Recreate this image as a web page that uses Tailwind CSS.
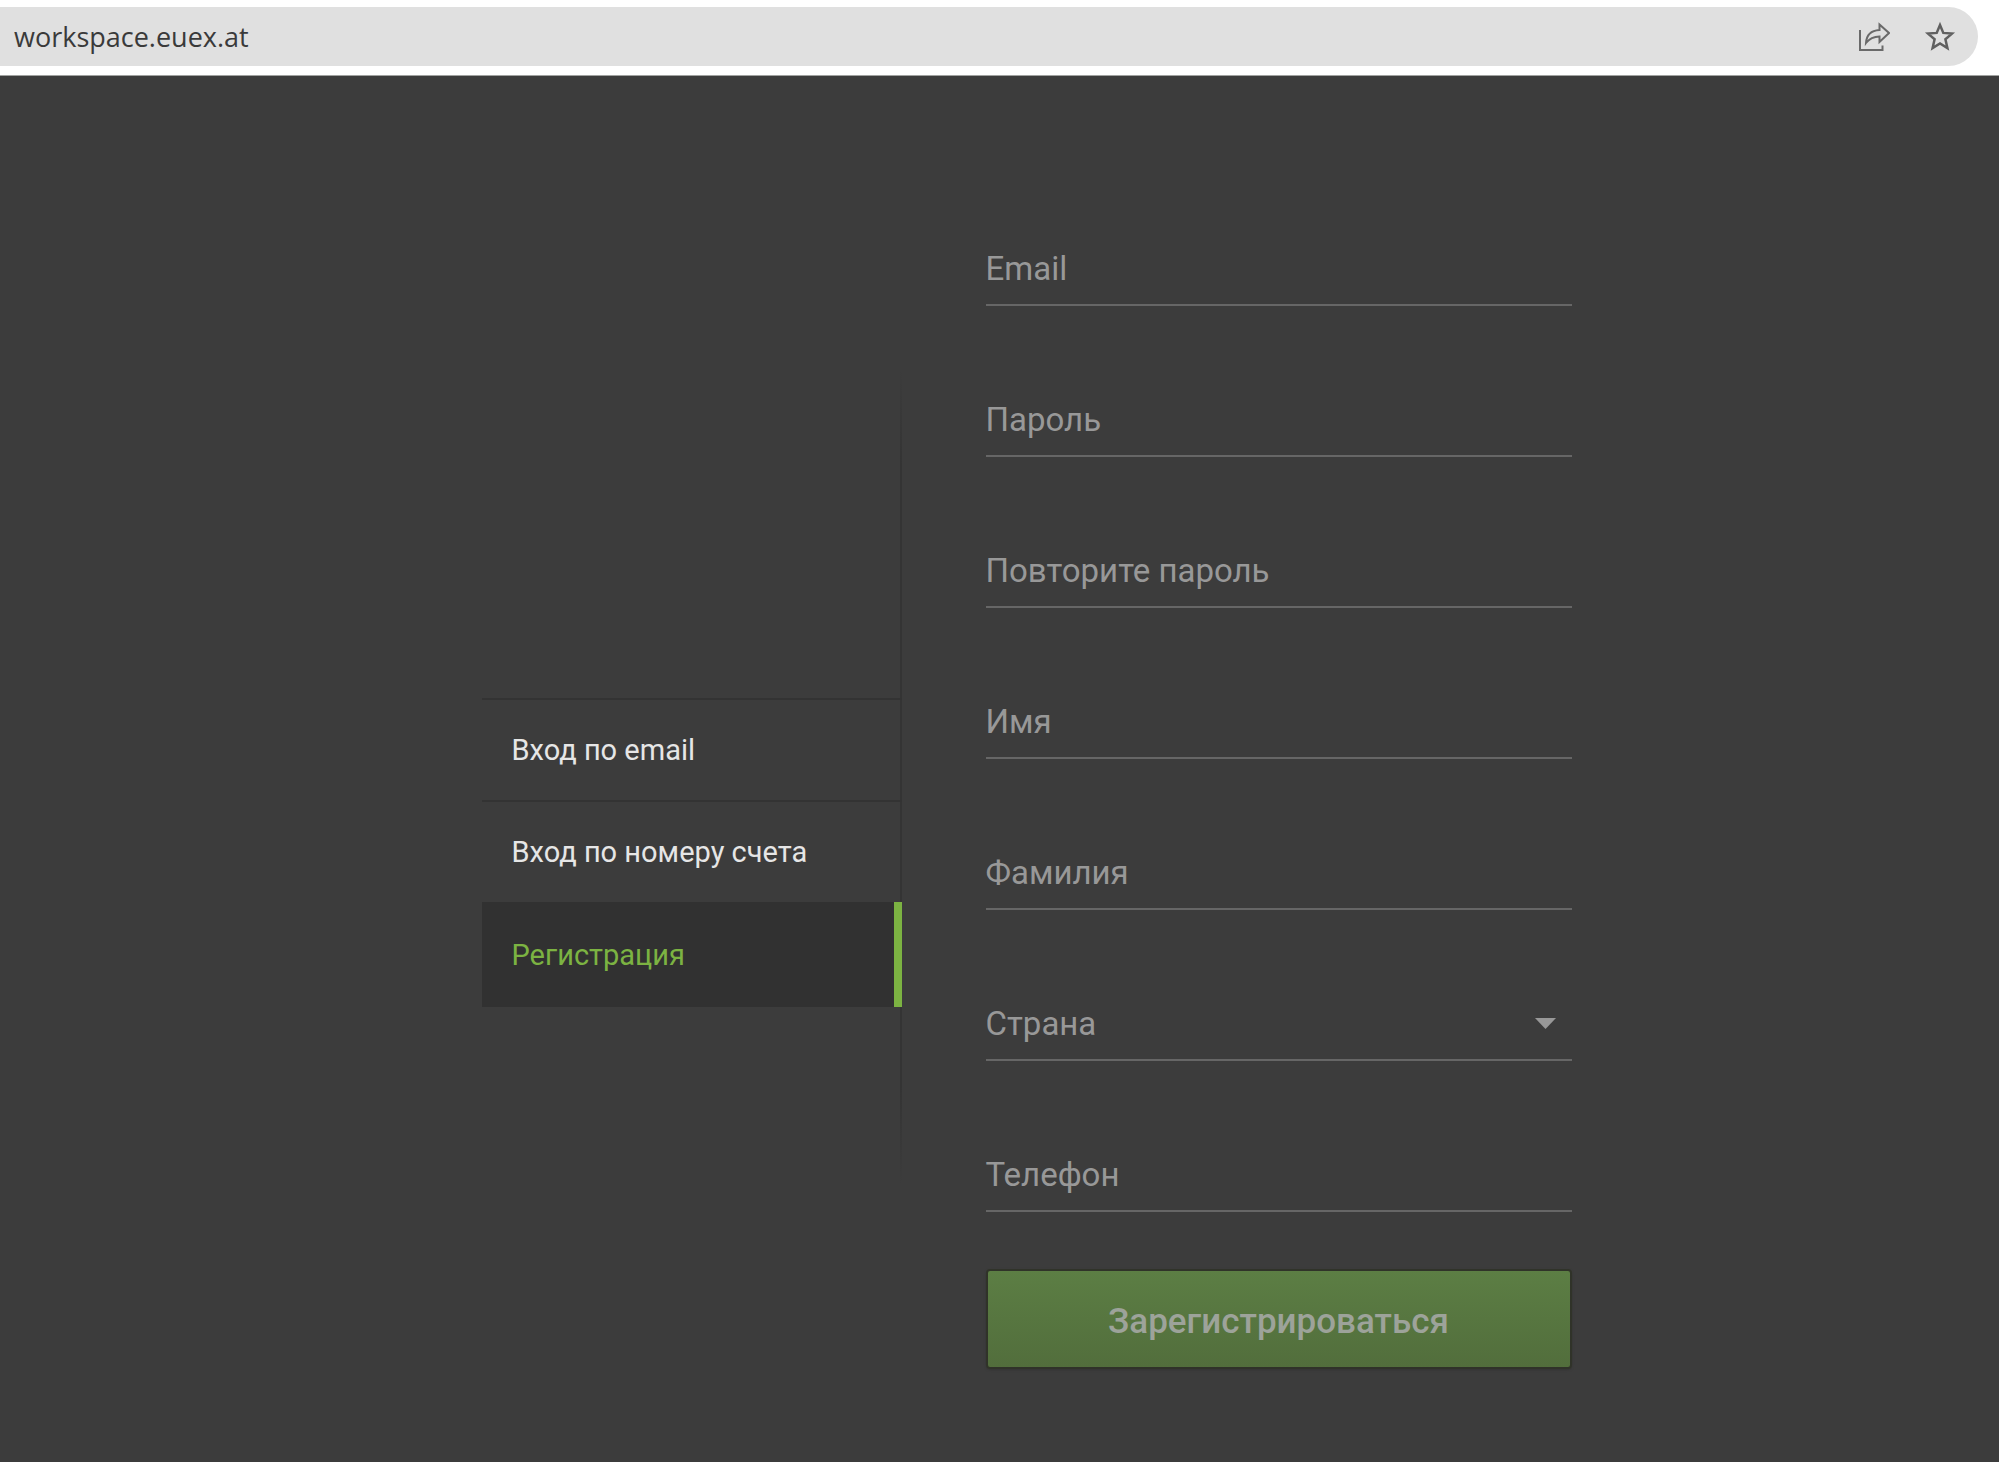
<!DOCTYPE html>
<html lang="ru">
<head>
<meta charset="utf-8">
<meta name="viewport" content="width=device-width, initial-scale=1">
<title>workspace.euex.at</title>
<script src="https://cdn.jsdelivr.net/npm/@tailwindcss/browser@4"></script>
</head>
<body class="flex min-h-screen flex-col bg-[#3c3c3c] font-['Roboto',sans-serif]">
  <!-- Address bar -->
  <header class="border-b border-[#a0a2a0] bg-white pt-[7px] pr-[21px] pb-[9px]">
    <div class="flex h-[59px] items-center justify-between rounded-r-full bg-[#e0e0e0] pr-[22px] pl-[14px]">
      <input type="text" aria-label="Адрес" value="workspace.euex.at" class="min-w-0 flex-1 bg-transparent font-['Open_Sans',sans-serif] text-[27px] leading-9 text-[#3a3a3a] outline-none">
      <div class="flex items-center gap-[34px]">
        <button type="button" aria-label="Поделиться" class="text-[#6a6a6a]">
          <svg class="size-8" viewBox="0 0 32 32" fill="none" stroke="currentColor" stroke-width="2"><path d="M2 9V29H24.500V24.500"/><path d="M8 22C8.500 14 13 9.500 21.500 9V3.500L31 12L21.500 21V15.500C15.500 15.500 11.500 17.500 8 22Z"/></svg>
        </button>
        <button type="button" aria-label="Добавить в закладки" class="text-[#606060]">
          <svg class="size-8" viewBox="0 0 32 32" fill="none" stroke="currentColor" stroke-width="2.5"><path d="M16 4L19.300 11.900L28 12.600L21.400 18.300L23.400 27L16 22.400L8.600 27L10.600 18.300L4 12.600L12.700 11.900Z"/></svg>
        </button>
      </div>
    </div>
  </header>

  <main class="flex flex-1 items-start justify-center gap-[84px] pb-[94px] pl-[54px]">
    <!-- Sign-in modes -->
    <aside class="relative mt-[292px] h-[817px] w-[420px] pt-[330px]">
      <div class="absolute top-0 right-0 h-full w-0.5 bg-[linear-gradient(transparent,#343434_12%,#343434_88%,transparent)]"></div>
      <nav class="relative flex flex-col text-[29px] leading-9 text-[#e6e6e6]">
        <a href="#email" class="flex h-[102px] items-center border-t-2 border-[#333333] pl-[30px]">Вход по email</a>
        <a href="#account" class="flex h-[102px] items-center border-t-2 border-[#333333] pl-[30px]">Вход по номеру счета</a>
        <a href="#register" aria-current="page" class="flex h-[105px] items-center border-r-8 border-[#7cb342] bg-[#313131] pl-[30px] text-[#7cb342]">Регистрация</a>
      </nav>
    </aside>

    <!-- Registration form -->
    <form class="flex w-[586px] flex-col pt-[149px] text-[33px] leading-10 text-[#989898]">
      <div class="flex flex-col gap-[70px]">
        <div class="grid h-[81px] border-b-2 border-[#666666]">
          <input id="email" type="email" placeholder=" " class="peer col-start-1 row-start-1 w-full bg-transparent pt-2 outline-none">
          <label for="email" class="pointer-events-none col-start-1 row-start-1 self-center pt-2 peer-[:not(:placeholder-shown)]:opacity-0">Email</label>
        </div>
        <div class="grid h-[81px] border-b-2 border-[#666666]">
          <input id="password" type="password" placeholder=" " class="peer col-start-1 row-start-1 w-full bg-transparent pt-2 outline-none">
          <label for="password" class="pointer-events-none col-start-1 row-start-1 self-center pt-2 peer-[:not(:placeholder-shown)]:opacity-0">Пароль</label>
        </div>
        <div class="grid h-[81px] border-b-2 border-[#666666]">
          <input id="repeat" type="password" placeholder=" " class="peer col-start-1 row-start-1 w-full bg-transparent pt-2 outline-none">
          <label for="repeat" class="pointer-events-none col-start-1 row-start-1 self-center pt-2 peer-[:not(:placeholder-shown)]:opacity-0">Повторите пароль</label>
        </div>
        <div class="grid h-[81px] border-b-2 border-[#666666]">
          <input id="name" type="text" placeholder=" " class="peer col-start-1 row-start-1 w-full bg-transparent pt-2 outline-none">
          <label for="name" class="pointer-events-none col-start-1 row-start-1 self-center pt-2 peer-[:not(:placeholder-shown)]:opacity-0">Имя</label>
        </div>
        <div class="grid h-[81px] border-b-2 border-[#666666]">
          <input id="surname" type="text" placeholder=" " class="peer col-start-1 row-start-1 w-full bg-transparent pt-2 outline-none">
          <label for="surname" class="pointer-events-none col-start-1 row-start-1 self-center pt-2 peer-[:not(:placeholder-shown)]:opacity-0">Фамилия</label>
        </div>
        <div class="grid h-[81px] border-b-2 border-[#666666]">
          <select id="country" required class="peer col-start-1 row-start-1 w-full appearance-none bg-transparent pt-2 outline-none">
            <option value=""></option>
          </select>
          <label for="country" class="pointer-events-none col-start-1 row-start-1 self-center pt-2 peer-valid:opacity-0">Страна</label>
          <svg class="pointer-events-none col-start-1 row-start-1 mt-2 mr-4 h-[11px] w-[21px] self-center justify-self-end" viewBox="0 0 21 11" fill="currentColor"><path d="M0 0H21L10.500 11Z"/></svg>
        </div>
        <div class="grid h-[81px] border-b-2 border-[#666666]">
          <input id="phone" type="tel" placeholder=" " class="peer col-start-1 row-start-1 w-full bg-transparent pt-2 outline-none">
          <label for="phone" class="pointer-events-none col-start-1 row-start-1 self-center pt-2 peer-[:not(:placeholder-shown)]:opacity-0">Телефон</label>
        </div>
      </div>
      <button type="submit" class="mt-[57px] h-[100px] rounded-sm border-2 border-[#303329] bg-linear-to-b from-[#5c7e44] to-[#526e3c] pt-1.5 text-[35px] font-medium text-[#9da39a] shadow-sm">Зарегистрироваться</button>
    </form>
  </main>
</body>
</html>
